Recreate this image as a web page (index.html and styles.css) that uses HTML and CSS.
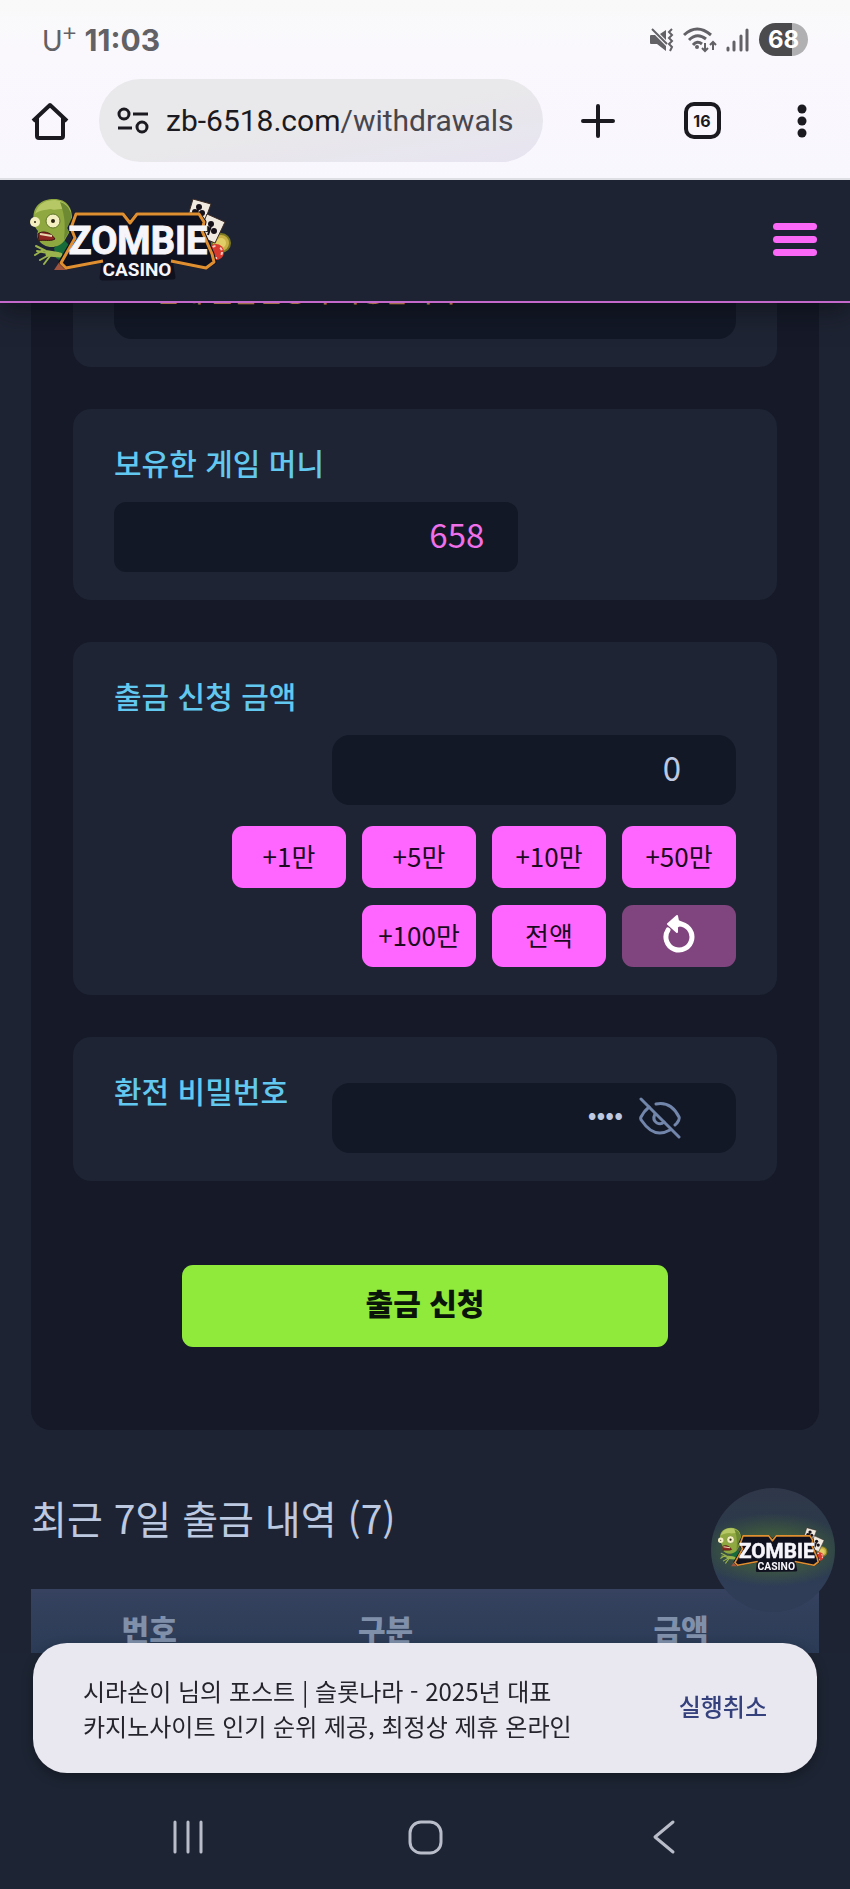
FILE: index.html
```
<!DOCTYPE html>
<html lang="ko">
<head>
  <meta charset="UTF-8" />
  <meta name="viewport" content="width=device-width, initial-scale=1.0" />
  <title>출금 신청</title>
  <link rel="stylesheet" href="styles.css">
</head>
<body>
  <div class="browser">
    <div class="status-bar">
      <div class="status-left">
        <span class="carrier">U<sup>+</sup></span>
        <span class="clock">11:03</span>
      </div>
      <div class="status-right">
        <svg width="24" height="24" viewBox="0 0 24 24" fill="#626165">
          <path d="M0 8 Q0 7 1 7 H5 L16 18 V23 L7 16 H1 Q0 16 0 15 Z M16 2 V12 L10 6 Z"/>
          <path d="M2 1 L17 16" stroke="#626165" stroke-width="2"/>
          <path d="M22 1 L19 4 L22 7 L19 10 L22 13 L19 16 L22 19 L20 23" fill="none" stroke="#626165" stroke-width="2"/>
        </svg>
        <svg width="34" height="26" viewBox="0 0 34 26" fill="none" stroke="#626165" stroke-width="3">
          <path d="M1 8 Q14 -4 28 8"/><path d="M6 13 Q14 5 23 12"/><path d="M10 18 Q14 13 19 17" />
          <circle cx="14" cy="20" r="2" fill="#626165" stroke="none"/>
          <path d="M22 16 V24 M19 21 L22 24 L25 21 M30 23 V15 M27 18 L30 15 L33 18" stroke-width="2"/>
        </svg>
        <svg width="24" height="26" viewBox="0 0 24 26" stroke="#626165" stroke-width="3" stroke-linecap="round">
          <path d="M2 21 V23"/><path d="M8 15 V23"/><path d="M15 9 V23"/><path d="M21 3 V23"/>
        </svg>
        <span class="battery">68</span>
      </div>
    </div>
    <div class="toolbar">
      <button class="icon-btn" aria-label="홈">
        <svg width="38" height="38" viewBox="0 0 38 38" fill="none" stroke="#1b1a20" stroke-width="4" stroke-linejoin="round">
          <path d="M2 19 L19 3 L36 19"/><path d="M6 16 V34 Q6 36 8 36 H30 Q32 36 32 34 V16"/>
        </svg>
      </button>
      <div class="url-bar">
        <svg width="32" height="28" viewBox="0 0 32 28" fill="none" stroke="#1b1a20" stroke-width="3">
          <circle cx="7" cy="7" r="5"/><path d="M16 7 H31"/><path d="M1 21 H15"/><circle cx="25" cy="20" r="5"/>
        </svg>
        <span class="url">zb-6518.com<span class="path">/withdrawals</span></span>
      </div>
      <div class="toolbar-actions">
        <button class="icon-btn" aria-label="새 탭">
          <svg width="34" height="34" viewBox="0 0 34 34" stroke="#1b1a20" stroke-width="4" stroke-linecap="round"><path d="M17 2 V32 M2 17 H32"/></svg>
        </button>
        <button class="icon-btn tabs" aria-label="탭">16</button>
        <button class="icon-btn" aria-label="메뉴">
          <svg width="10" height="36" viewBox="0 0 10 36" fill="#1b1a20"><circle cx="5" cy="6" r="4.5"/><circle cx="5" cy="18" r="4.5"/><circle cx="5" cy="30" r="4.5"/></svg>
        </button>
      </div>
    </div>
  </div>

  <header class="site-header">
    <a href="#" aria-label="ZOMBIE CASINO">
      <svg width="202" height="84" viewBox="0 0 202 84">
        <g id="logo">
          <!-- cards and chips -->
          <circle cx="191" cy="45" r="9" fill="#c9b046" stroke="#7d7a22" stroke-width="2"/>
          <circle cx="191" cy="45" r="5" fill="#e2ce66"/>
          <g stroke="#3a2a24" stroke-width="1">
            <path d="M163 1 L181 6 L173 28 L157 21 Z" fill="#f0e9e0"/>
            <path d="M177 16 L195 24 L185 45 L168 38 Z" fill="#f0e9e0"/>
          </g>
          <g fill="#17121a">
            <circle cx="169" cy="9" r="3"/><circle cx="165" cy="14" r="3"/><circle cx="172" cy="15" r="3"/>
            <circle cx="181" cy="26" r="3"/><circle cx="177" cy="31" r="3"/><circle cx="184" cy="33" r="3"/>
            <path d="M168 11 L167 19 M181 28 L178 37" stroke="#17121a" stroke-width="2"/>
          </g>
          <circle cx="186" cy="54" r="8" fill="#d8392f"/>
          <circle cx="186" cy="54" r="6" fill="none" stroke="#f3c9c0" stroke-width="2" stroke-dasharray="3 5"/>
          <!-- zombie -->
          <path d="M24 50 L34 42 L42 50 L36 66 L26 60 Z" fill="#176b3a"/>
          <path d="M4 24 C1 8 12 1 24 1 C37 1 43 10 42 23 C42 32 38 36 35 42 C30 49 21 51 14 47 C8 44 6 38 8 33 C6 31 4 28 4 24 Z" fill="#8fa83f"/>
          <path d="M5 16 C8 5 16 2 25 2 C33 3 39 7 41 14 C33 7 26 14 21 11 C15 12 9 12 5 16 Z" fill="#b5c865"/>
          <path d="M30 4 C40 7 42 15 41 25 C40 33 37 37 34 42 C35 30 36 20 30 4 Z" fill="#6d8a33"/>
          <circle cx="5" cy="24" r="5" fill="#f4efc0"/><circle cx="23" cy="23" r="7" fill="#f4efc0" stroke="#5f7728" stroke-width="1"/>
          <circle cx="5" cy="24" r="1" fill="#2b2412"/><circle cx="23" cy="23" r="2" fill="#2b2412"/>
          <path d="M8 36 C12 32 21 34 25 41 C20 44 12 41 9 43 Z" fill="#8e2622" stroke="#3d1513" stroke-width="1"/>
          <path d="M10 36 L22 38" stroke="#e8d8b0" stroke-width="2"/>
          <g fill="none" stroke="#9bb34d" stroke-width="2" stroke-linecap="round">
            <path d="M28 55 L16 53 L6 48"/><path d="M18 55 L7 53"/><path d="M19 57 L10 62"/><path d="M20 58 L14 66"/><path d="M13 52 L5 57"/>
            <path d="M30 57 L18 56" stroke-width="5"/>
          </g>
          <path d="M24 72 L30 63 L37 72 Z" fill="#a1543e"/>
          <!-- name plate -->
          <path d="M46 17 L93 17 L100 25 L107 17 L169 17 L174 24 L172 33 L182 56 L184 64 L176 69 L140 62 L143 79 L72 80 L74 62 L36 69 L31 64 L45 40 L40 30 Z" fill="#10111f" stroke="#10111f" stroke-width="5" stroke-linejoin="round"/>
          <path d="M73 63 L36 70 L31 65 L45 40 L41 30 L46 16 L93 16 L100 25 L107 16 L169 16 L174 24 L172 33 L182 56 L184 64 L176 70 L141 63" fill="none" stroke="#e08f30" stroke-width="3" stroke-linejoin="round"/>
          <text class="logo-zombie" x="108" y="56" text-anchor="middle">ZOMBIE</text>
          <text class="logo-casino" x="107" y="78" text-anchor="middle">CASINO</text>
        </g>
      </svg>
    </a>
    <button class="menu-btn" aria-label="메뉴"><span></span><span></span><span></span></button>
  </header>

  <main>
    <form class="panel">
      <div class="card notice-card">
        <div class="field notice">현재 출금신청이 가능합니다.</div>
      </div>

      <div class="card">
        <label for="money">보유한 게임 머니</label>
        <div class="field balance">
          <input type="text" id="money" value="658" readonly>
        </div>
      </div>

      <div class="card">
        <label for="amount">출금 신청 금액</label>
        <div class="field narrow">
          <input type="text" id="amount" value="0">
        </div>
        <div class="amount-buttons">
          <button type="button">+1만</button>
          <button type="button">+5만</button>
          <button type="button">+10만</button>
          <button type="button">+50만</button>
          <button type="button">+100만</button>
          <button type="button">전액</button>
          <button type="button" class="reset" aria-label="초기화">
            <svg width="32" height="42" viewBox="0 0 32 42">
              <path d="M16 11 A13 13 0 1 1 5 17" fill="none" stroke="#fff" stroke-width="5" stroke-linecap="round"/>
              <path d="M5 11 L14 3 L15 8 L19 10 L14 14 L14 19 Z" fill="#fff" stroke="#fff" stroke-width="2" stroke-linejoin="round"/>
            </svg>
          </button>
        </div>
      </div>

      <div class="card password-card">
        <label for="pin">환전 비밀번호</label>
        <div class="field narrow">
          <input type="password" id="pin" value="1234">
          <button type="button" class="eye" aria-label="비밀번호 표시">
            <svg width="42" height="42" viewBox="0 0 42 42" fill="none" stroke="#7286ab" stroke-width="3" stroke-linecap="round">
              <path d="M17 7 Q32 4 40 20 Q41 22 38 26 L36 28"/>
              <path d="M10 10 Q5 14 2 20 Q1 22 3 24 Q15 42 31 33"/>
              <path d="M16 17 Q13 23 18 26 Q22 28 25 25"/>
              <path d="M2 2 L40 40"/>
            </svg>
          </button>
        </div>
      </div>

      <button type="submit" class="submit">출금 신청</button>
    </form>

    <section class="history">
      <h2>최근 7일 출금 내역 (7)</h2>
      <div class="table-wrap">
        <table>
          <thead>
            <tr><th>번호</th><th>구분</th><th class="wide">금액</th></tr>
          </thead>
        </table>
      </div>
    </section>
  </main>

  <a href="#" class="floating" aria-label="ZOMBIE CASINO"><svg width="110" height="46" viewBox="0 0 202 84"><use href="#logo"/></svg></a>

  <div class="toast">
    <p>시라손이 님의 포스트 | 슬롯나라 - 2025년 대표<br>카지노사이트 인기 순위 제공, 최정상 제휴 온라인</p>
    <button type="button">실행취소</button>
  </div>

  <footer class="nav-bar">
    <button class="icon-btn" aria-label="최근 앱">
      <svg width="36" height="36" viewBox="0 0 36 36" stroke="#b9bdca" stroke-width="3" stroke-linecap="round"><path d="M5 3 V33 M18 3 V33 M31 3 V33"/></svg>
    </button>
    <button class="icon-btn" aria-label="홈">
      <svg width="36" height="36" viewBox="0 0 36 36" fill="none" stroke="#b9bdca" stroke-width="3"><rect x="3" y="3" width="31" height="31" rx="11"/></svg>
    </button>
    <button class="icon-btn" aria-label="뒤로">
      <svg width="36" height="36" viewBox="0 0 36 36" fill="none" stroke="#b9bdca" stroke-width="3" stroke-linecap="round" stroke-linejoin="round"><path d="M29 3 L11 18 L29 33"/></svg>
    </button>
  </footer>
</body>
</html>
```

FILE: styles.css
```
* {
  box-sizing: border-box;
}
body {
  margin: 0;
  background: #1e2333;
  color: #bcc9e0;
  font-family: 'Noto Sans CJK KR', sans-serif;
}
button {
  border: none;
  padding: 0;
  font-family: inherit;
  cursor: pointer;
}
svg {
  display: block;
}
.icon-btn {
  background: none;
}

/* browser chrome */
.browser {
  position: relative;
  z-index: 3;
  height: 180px;
  background: linear-gradient(#f9f9f9, #faf8fd 30%, #f9f7fe);
  border-bottom: 2px solid #dedfe4;
  font-family: Roboto, sans-serif;
  color: #1b1a20;
}
.status-bar {
  display: flex;
  justify-content: space-between;
  align-items: center;
  height: 79px;
  padding: 0 42px;
}
.status-left, .status-right {
  display: flex;
  align-items: center;
}
.status-left {
  gap: 8px;
  color: #626165;
}
.status-right {
  gap: 9px;
}
.carrier {
  font-family: Lato, sans-serif;
  font-size: 28px;
}
.carrier sup {
  font-size: 24px;
  line-height: 0;
}
.clock {
  font-family: Inter, sans-serif;
  font-size: 30px;
  font-weight: 700;
}
.battery {
  width: 49px;
  height: 33px;
  border-radius: 17px;
  background: linear-gradient(to right, #4b4a4d 68%, #b0afb2 68%);
  color: #fff;
  font-family: Inter, sans-serif;
  font-size: 24px;
  font-weight: 700;
  line-height: 33px;
  text-align: center;
}
.toolbar {
  display: flex;
  align-items: center;
  height: 83px;
  padding: 0 43px 0 31px;
}
.url-bar {
  display: flex;
  align-items: center;
  flex: 1;
  gap: 17px;
  height: 83px;
  margin: 0 38px 0 30px;
  padding: 0 18px;
  border-radius: 42px;
  background: linear-gradient(170deg, #e9e8ea 50%, #e7e4f1);
}
.url {
  font-size: 30px;
  white-space: nowrap;
}
.path {
  color: #47464e;
}
.toolbar-actions {
  display: flex;
  align-items: center;
  justify-content: space-between;
  width: 226px;
}
.tabs {
  width: 37px;
  height: 37px;
  margin-right: 8px;
  border: 4px solid #1b1a20;
  border-radius: 10px;
  font-family: Inter, sans-serif;
  font-size: 16px;
  font-weight: 700;
  color: #1b1a20;
}

/* site header */
.site-header {
  position: relative;
  z-index: 2;
  display: flex;
  justify-content: space-between;
  align-items: center;
  height: 123px;
  padding: 0 33px 2px 30px;
  background: #1e2333;
  border-bottom: 2px solid #c468cc;
  box-shadow: 0 8px 24px rgba(5,9,12,0.5);
}
.logo-zombie, .logo-casino {
  font-family: Roboto, sans-serif;
  font-weight: 700;
  fill: #f6f5fa;
}
.logo-zombie {
  font-size: 38px;
  stroke: #f6f5fa;
  stroke-width: 1px;
}
.logo-casino {
  font-size: 19px;
}
.menu-btn {
  display: flex;
  flex-direction: column;
  gap: 6px;
  width: 44px;
  background: none;
}
.menu-btn span {
  height: 7px;
  border-radius: 4px;
  background: #fb68f7;
}

/* withdrawal form */
main {
  overflow: hidden;
  padding: 0 31px;
}
.panel {
  display: flex;
  flex-direction: column;
  gap: 42px;
  margin-top: -78px;
  padding: 0 42px 83px;
  border-radius: 20px;
  background: #151928;
}
.card {
  padding: 31px 41px 28px;
  border-radius: 18px;
  background: #1e2433;
}
.card label {
  display: block;
  font-size: 30px;
  font-weight: 500;
  line-height: 44px;
  color: #62c8f0;
}
.field {
  display: flex;
  align-items: center;
  height: 70px;
  margin-top: 18px;
  border-radius: 18px;
  background: #131827;
}
.field input {
  flex: 1;
  min-width: 0;
  padding: 0 0 6px;
  border: none;
  outline: none;
  background: none;
  color: #bcc9e0;
  font-family: inherit;
  font-size: 33px;
  text-align: right;
}
.notice-card {
  padding-top: 20px;
}
.notice {
  height: 94px;
  margin-top: 0;
  padding: 0 41px 4px;
  font-size: 26px;
  font-weight: 500;
  color: #ffb070;
}
.balance {
  width: 65%;
  padding: 0 34px;
  border-radius: 12px;
}
.field.balance input {
  color: #f070ea;
}
.narrow {
  width: 65%;
  margin-left: auto;
  padding: 0 55px;
}
.amount-buttons {
  display: flex;
  flex-wrap: wrap;
  justify-content: flex-end;
  gap: 17px 16px;
  margin-top: 21px;
}
.amount-buttons button {
  display: flex;
  align-items: center;
  justify-content: center;
  width: 114px;
  height: 62px;
  padding-bottom: 4px;
  border-radius: 11px;
  background: #ff66ff;
  color: #1d0a22;
  font-size: 26px;
}
.amount-buttons .reset {
  background: #80447e;
}
.password-card {
  display: flex;
  justify-content: space-between;
}
.password-card .field {
  margin-top: 15px;
}
.password-card .field input {
  padding-bottom: 12px;
  font-size: 26px;
}
.eye {
  margin-left: 16px;
  background: none;
}
.submit {
  align-self: center;
  width: 69%;
  height: 82px;
  margin-top: 42px;
  padding-bottom: 8px;
  border-radius: 11px;
  background: #8fea3c;
  color: #0a1408;
  font-size: 30px;
  font-weight: 900;
}

/* history */
.history h2 {
  margin: 59px 0 44px;
  font-size: 39px;
  font-weight: 400;
  line-height: 56px;
}
.table-wrap {
  overflow: hidden;
}
table {
  width: 105%;
  table-layout: fixed;
  border-collapse: collapse;
  background: linear-gradient(#36425f, #2b3b56);
}
th {
  width: 30%;
  padding: 22px 0 8px;
  font-size: 30px;
  font-weight: 900;
  line-height: 34px;
  color: #8090ab;
}
.wide {
  width: 45%;
}

/* overlays */
.floating {
  position: fixed;
  right: 15px;
  bottom: 277px;
  display: flex;
  align-items: center;
  justify-content: center;
  width: 124px;
  height: 124px;
  border-radius: 50%;
  background: radial-gradient(ellipse 60px 28px at center, #4a6b36, rgba(74,107,54,0.5) 70%, rgba(74,107,54,0) 130%), linear-gradient(#2f3749, #2a3c4b 50%, #2f3d57 80%);
}
.toast {
  position: fixed;
  left: 33px;
  right: 33px;
  bottom: 116px;
  display: flex;
  align-items: center;
  justify-content: space-between;
  height: 130px;
  padding: 0 50px;
  border-radius: 34px;
  background: #e9e7f0;
  box-shadow: 0 4px 12px rgba(0,0,0,0.3);
}
.toast p {
  margin: 0;
  font-size: 24px;
  line-height: 35px;
  color: #25232b;
}
.toast button {
  padding-bottom: 6px;
  background: none;
  color: #34417c;
  font-size: 24px;
  font-weight: 500;
}
.nav-bar {
  display: flex;
  justify-content: space-between;
  align-items: flex-end;
  height: 236px;
  padding: 0 170px 34px;
  background: #1d2433;
}
```
